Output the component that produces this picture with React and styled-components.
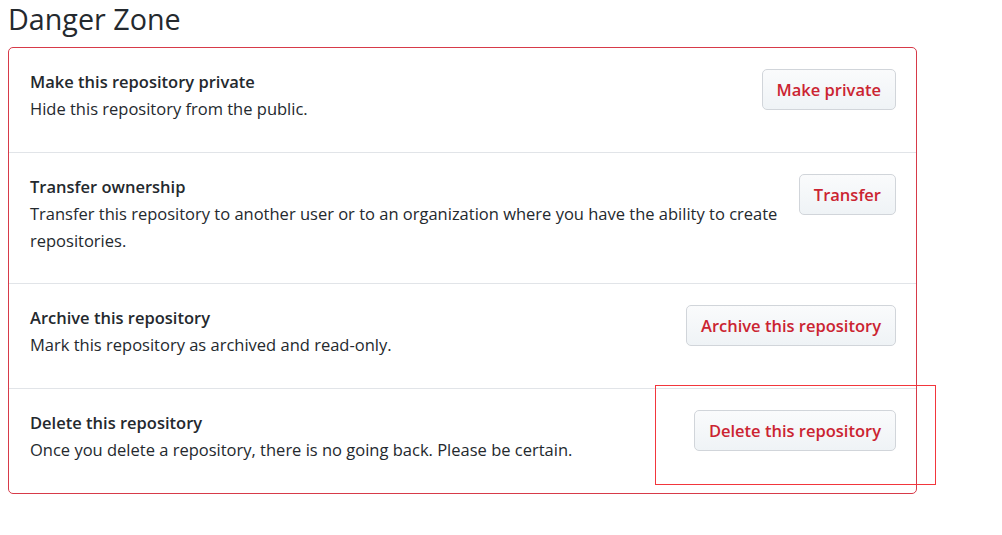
import React from 'react';
import styled, { createGlobalStyle } from 'styled-components';

const GlobalStyle = createGlobalStyle`
  body {
    margin: 0;
    padding: 0 8px;
    background: #fff;
    font-family: "Open Sans", "Noto Sans", Arial, sans-serif;
    color: #24292e;
  }
`;

const rows = [
  {
    title: 'Make this repository private',
    desc: 'Hide this repository from the public.',
    action: 'Make private',
  },
  {
    title: 'Transfer ownership',
    desc: 'Transfer this repository to another user or to an organization where you have the ability to create repositories.',
    action: 'Transfer',
  },
  {
    title: 'Archive this repository',
    desc: 'Mark this repository as archived and read-only.',
    action: 'Archive this repository',
  },
  {
    title: 'Delete this repository',
    desc: 'Once you delete a repository, there is no going back. Please be certain.',
    action: 'Delete this repository',
    marked: true,
  },
];

const App = () => (
  <>
    <GlobalStyle />
    <Page>
      <Heading>Danger Zone</Heading>
      <DangerBox>
        {rows.map((row) => (
          <Row key={row.title}>
            <Info>
              <Title>{row.title}</Title>
              <Desc>{row.desc}</Desc>
            </Info>
            <ActionWrap>
              <DangerButton>{row.action}</DangerButton>
              {row.marked && <Highlight />}
            </ActionWrap>
          </Row>
        ))}
      </DangerBox>
    </Page>
  </>
);

const Page = styled.div`
  width: 909px;
`;

const Heading = styled.h2`
  margin: 0;
  font-size: 28.7px;
  font-weight: 400;
  line-height: 37px;
  height: 47px;
`;

const DangerBox = styled.div`
  border: 1px solid #d73a49;
  border-radius: 5px;
`;

const Row = styled.div`
  display: flex;
  align-items: flex-start;
  gap: 10px;
  padding: 21px 20px 29.5px 21px;
  border-top: 1px solid #e1e4e8;
  &:first-child {
    border-top: none;
  }
  &:last-child {
    padding-bottom: 30.5px;
  }
`;

const Info = styled.div`
  flex: 1;
  min-width: 0;
  font-size: 16.5px;
`;

const Title = styled.div`
  font-weight: 600;
  line-height: 26px;
`;

const Desc = styled.p`
  margin: 0;
  line-height: 27px;
`;

const ActionWrap = styled.div`
  position: relative;
  flex-shrink: 0;
`;

const DangerButton = styled.button`
  display: block;
  height: 41px;
  padding: 0 14px;
  font-family: inherit;
  font-size: 16.5px;
  font-weight: 600;
  color: #cb2431;
  background: linear-gradient(#fafbfc, #eff3f6);
  border: 1px solid #d1d5da;
  border-radius: 5px;
  white-space: nowrap;
`;

const Highlight = styled.div`
  position: absolute;
  left: -39px;
  top: -25px;
  right: -40px;
  bottom: -34px;
  border: 1px solid #f2363c;
  pointer-events: none;
`;

export default App;
